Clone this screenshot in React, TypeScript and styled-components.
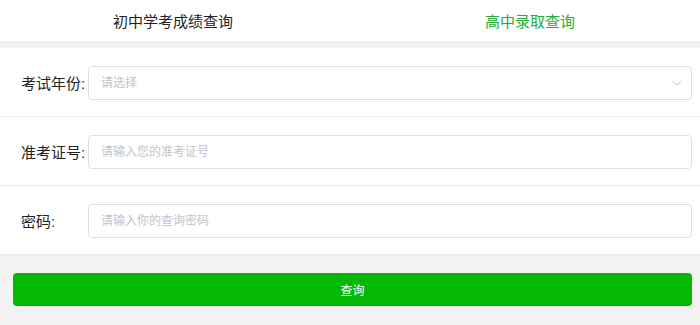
import React, { useState } from 'react';
import styled, { createGlobalStyle } from 'styled-components';

const GlobalStyle = createGlobalStyle`
    html, body {
        margin: 0;
        padding: 0;
        background: #f2f2f2;
        font-family: "Liberation Sans", "Noto Sans CJK SC", sans-serif;
    }
    * {
        box-sizing: border-box;
    }
`;

type TabKey = 'junior' | 'senior';

const tabs: { key: TabKey; label: string }[] = [
    { key: 'junior', label: '初中学考成绩查询' },
    { key: 'senior', label: '高中录取查询' },
];

export default function App() {
    const [activeTab, setActiveTab] = useState<TabKey>('senior');
    const [year, setYear] = useState('');
    const [ticket, setTicket] = useState('');
    const [password, setPassword] = useState('');

    return (
        <Page>
            <GlobalStyle />
            <TabBar>
                {tabs.map(tab => (
                    <Tab key={tab.key} $active={activeTab === tab.key} onClick={() => setActiveTab(tab.key)}>
                        {tab.label}
                    </Tab>
                ))}
            </TabBar>

            <Form>
                <Row>
                    <Label>考试年份:</Label>
                    <SelectBox>
                        <Select value={year} onChange={(e) => setYear(e.target.value)} $empty={year === ''}>
                            <option value="">请选择</option>
                            <option value="2024">2024</option>
                            <option value="2023">2023</option>
                        </Select>
                        <Arrow viewBox="0 0 14 14">
                            <path d="M2.5 5 L7 9 L11.5 5" fill="none" stroke="#c0c4cc" strokeWidth="1" />
                        </Arrow>
                    </SelectBox>
                </Row>
                <Row>
                    <Label>准考证号:</Label>
                    <Input placeholder="请输入您的准考证号" value={ticket} onChange={(e) => setTicket(e.target.value)} />
                </Row>
                <Row>
                    <Label>密码:</Label>
                    <Input type="text" placeholder="请输入你的查询密码" value={password} onChange={(e) => setPassword(e.target.value)} />
                </Row>
            </Form>

            <Footer>
                <SubmitButton>查询</SubmitButton>
            </Footer>
        </Page>
    );
}

const Page = styled.div`
    width: 700px;
    min-height: 325px;
    background: #f2f2f2;
`;

const TabBar = styled.div`
    display: grid;
    grid-template-columns: 346px 1fr;
    height: 41px;
    background: #ffffff;
    margin-bottom: 7px;
`;

const Tab = styled.div<{ $active: boolean }>`
    display: flex;
    align-items: center;
    justify-content: center;
    font-size: 15px;
    color: ${p => (p.$active ? '#22ac38' : '#222222')};
    cursor: pointer;

    & + & {
        padding-left: 14px;
    }
`;

const Form = styled.div`
    background: #ffffff;
`;

const Row = styled.div`
    display: flex;
    align-items: center;
    height: 69px;
    padding: 1px 8px 0 21px;
    border-bottom: 1px solid #ebebeb;
`;

const Label = styled.span`
    width: 67px;
    flex-shrink: 0;
    font-size: 15px;
    color: #222222;
`;

const Input = styled.input`
    flex: 1;
    height: 34px;
    padding: 0 12px;
    border: 1px solid #dcdfe6;
    border-radius: 4px;
    font-size: 12px;
    font-family: inherit;
    color: #333333;
    outline: none;

    &::placeholder {
        color: #c0c4cc;
    }
`;

const SelectBox = styled.div`
    flex: 1;
    position: relative;
    display: flex;
`;

const Select = styled.select<{ $empty: boolean }>`
    flex: 1;
    height: 34px;
    padding: 0 30px 0 12px;
    border: 1px solid #dcdfe6;
    border-radius: 4px;
    background: #ffffff;
    font-size: 12px;
    font-family: inherit;
    color: ${p => (p.$empty ? '#c0c4cc' : '#333333')};
    appearance: none;
    outline: none;
`;

const Arrow = styled.svg`
    position: absolute;
    right: 8px;
    top: 10px;
    width: 14px;
    height: 14px;
    pointer-events: none;
`;

const Footer = styled.div`
    padding: 18px 8px 19px 13px;
`;

const SubmitButton = styled.button`
    display: block;
    width: 100%;
    height: 33px;
    border: none;
    border-radius: 4px;
    background: #04b904;
    color: #ffffff;
    font-size: 12px;
    font-family: inherit;
    cursor: pointer;
`;
